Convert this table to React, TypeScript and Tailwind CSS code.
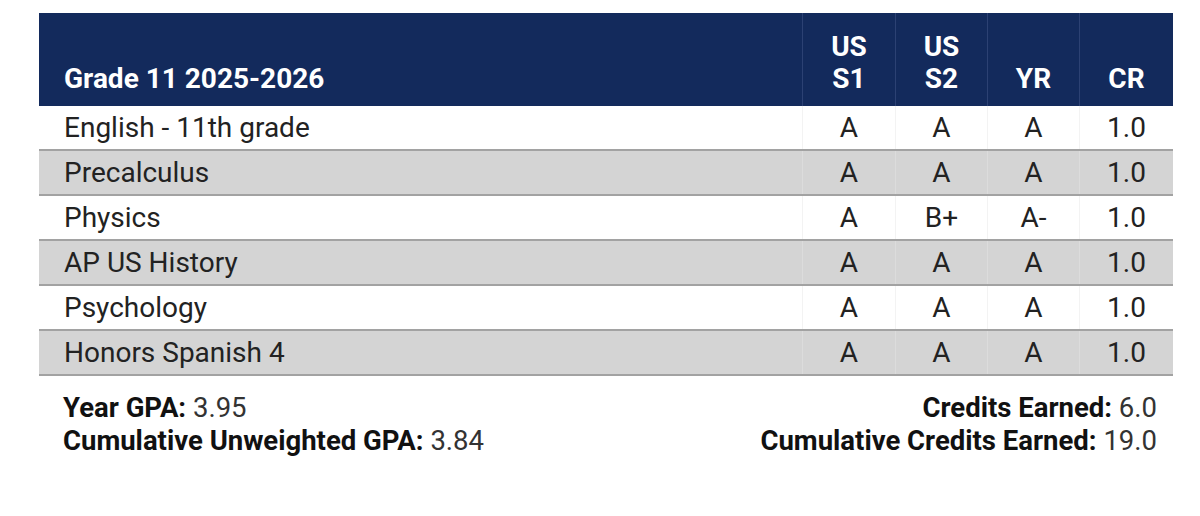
import React from "react";

const rows = [
  { name: "English - 11th grade", s1: "A", s2: "A", yr: "A", cr: "1.0" },
  { name: "Precalculus", s1: "A", s2: "A", yr: "A", cr: "1.0" },
  { name: "Physics", s1: "A", s2: "B+", yr: "A-", cr: "1.0" },
  { name: "AP US History", s1: "A", s2: "A", yr: "A", cr: "1.0" },
  { name: "Psychology", s1: "A", s2: "A", yr: "A", cr: "1.0" },
  { name: "Honors Spanish 4", s1: "A", s2: "A", yr: "A", cr: "1.0" },
];

export default function App() {
  return (
    <div
      className="w-[1200px] h-[516px] bg-white pl-[39px] pt-[13px] overflow-hidden"
      style={{ fontFamily: "Roboto, 'Noto Sans', sans-serif" }}
    >
      <div className="w-[1134px]">
        {/* Header */}
        <div className="flex h-[93px] bg-[#132a5c] text-white font-bold text-[28px] leading-[32px]">
          <div className="w-[763px] flex items-end pl-[25px] pb-[11px]">Grade 11 2025-2026</div>
          <div className="w-[93px] border-l border-[#2c4173] flex flex-col items-center justify-end pb-[11px]">
            <span>US</span>
            <span>S1</span>
          </div>
          <div className="w-[92px] border-l border-[#2c4173] flex flex-col items-center justify-end pb-[11px]">
            <span>US</span>
            <span>S2</span>
          </div>
          <div className="w-[92px] border-l border-[#2c4173] flex flex-col items-center justify-end pb-[11px]">
            <span>YR</span>
          </div>
          <div className="w-[94px] border-l border-[#2c4173] flex flex-col items-center justify-end pb-[11px]">
            <span>CR</span>
          </div>
        </div>
        {/* Rows */}
        {rows.map((r, i) => {
          const grey = i % 2 === 1;
          return (
            <div
              key={r.name}
              className={
                grey
                  ? "flex h-[45px] bg-[#d4d4d4] border-b-2 border-[#a2a2a2] text-[28px] text-[#222] items-stretch"
                  : "flex h-[45px] bg-white border-b-2 border-[#a2a2a2] text-[28px] text-[#222] items-stretch"
              }
            >
              <div className="w-[763px] flex items-center pl-[25px] pt-[1px]">{r.name}</div>
              <div className={grey ? "w-[93px] border-l border-[#dcdcdc] flex items-center justify-center pt-[1px]" : "w-[93px] border-l border-[#f3f3f3] flex items-center justify-center pt-[1px]"}>{r.s1}</div>
              <div className={grey ? "w-[92px] border-l border-[#dcdcdc] flex items-center justify-center pt-[1px]" : "w-[92px] border-l border-[#f3f3f3] flex items-center justify-center pt-[1px]"}>{r.s2}</div>
              <div className={grey ? "w-[92px] border-l border-[#dcdcdc] flex items-center justify-center pt-[1px]" : "w-[92px] border-l border-[#f3f3f3] flex items-center justify-center pt-[1px]"}>{r.yr}</div>
              <div className={grey ? "w-[94px] border-l border-[#dcdcdc] flex items-center justify-center pt-[1px]" : "w-[94px] border-l border-[#f3f3f3] flex items-center justify-center pt-[1px]"}>{r.cr}</div>
            </div>
          );
        })}
        {/* Footer */}
        <div className="flex justify-between pt-[15px] pl-[24px] pr-[16px] text-[27.5px] leading-[33px] text-[#111]">
          <div className="flex flex-col">
            <div>
              <span className="font-bold">Year GPA:</span> <span className="text-[#333]">3.95</span>
            </div>
            <div>
              <span className="font-bold">Cumulative Unweighted GPA:</span> <span className="text-[#333]">3.84</span>
            </div>
          </div>
          <div className="flex flex-col items-end">
            <div>
              <span className="font-bold">Credits Earned:</span> <span className="text-[#333]">6.0</span>
            </div>
            <div>
              <span className="font-bold">Cumulative Credits Earned:</span> <span className="text-[#333]">19.0</span>
            </div>
          </div>
        </div>
      </div>
    </div>
  );
}
